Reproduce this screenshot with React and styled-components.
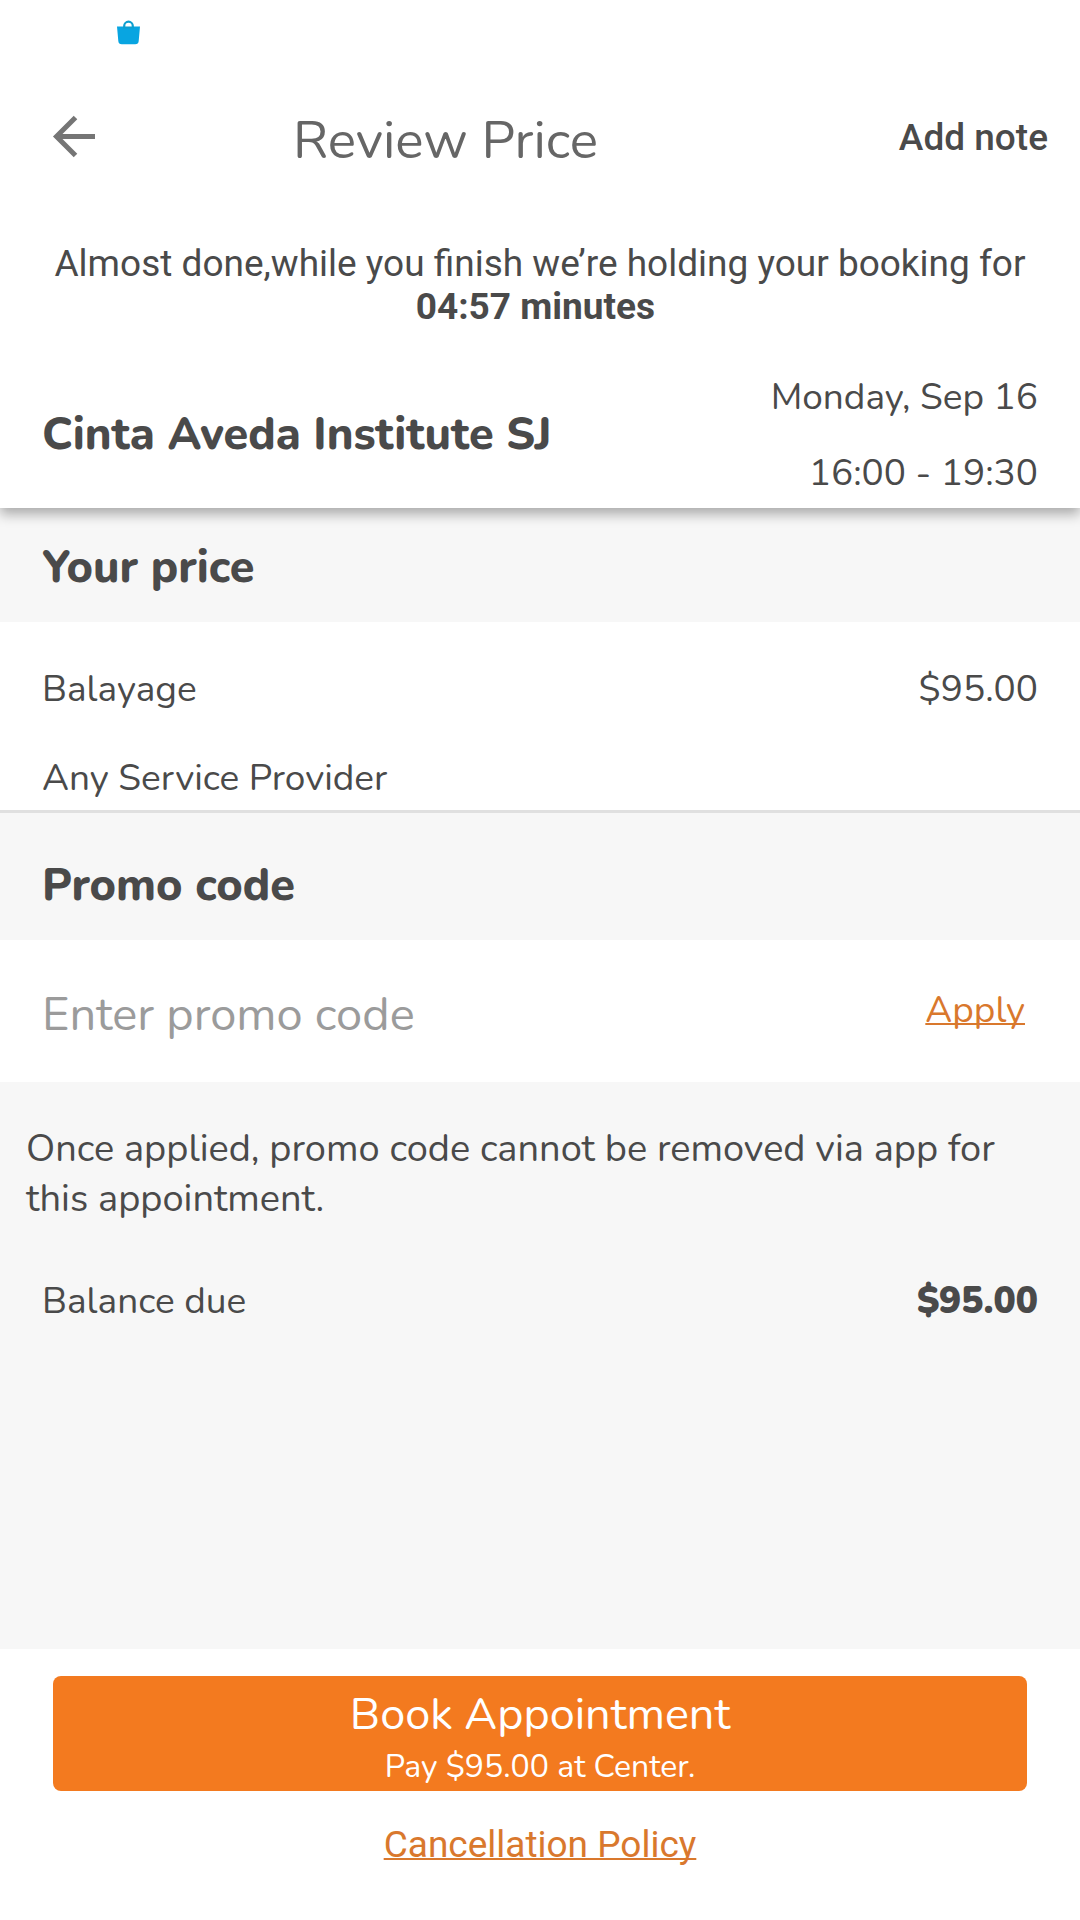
import React, { useState } from "react";
import styled, { createGlobalStyle } from "styled-components";

const ink = "#4a4a4a";
const orange = "#f37a1f";
const link = "#d9782d";
const shade = "#f7f7f7";
const rounded = '"Nunito", "Noto Sans", sans-serif';
const plain = 'Roboto, "Noto Sans", sans-serif';

const GlobalStyle = createGlobalStyle`
  *, *::before, *::after { box-sizing: border-box; }
  body { margin: 0; background: #fff; color: ${ink}; font-family: ${rounded}; }
  h1, h2, p { margin: 0; }
  button, input { font: inherit; color: inherit; }
`;

const Screen = styled.div`
  display: flex;
  flex-direction: column;
  min-height: 100vh;
  background: #fff;
`;

const StatusBar = styled.div`
  display: flex;
  height: 66px;
  padding: 20px 0 0 116px;
`;

const Header = styled.header`
  position: relative;
  z-index: 1;
  background: #fff;
  box-shadow: 0 6px 12px rgba(0, 0, 0, 0.32);
`;

const AppBar = styled.div`
  display: flex;
  align-items: center;
  height: 144px;
  padding: 0 32px 0 48px;
`;

const BareButton = styled.button`
  display: flex;
  padding: 0;
  border: 0;
  background: none;
  cursor: pointer;
`;

const Title = styled.h1`
  flex: 1;
  padding: 6px 0 0 193px;
  color: #666;
  font-size: 53px;
  font-weight: 400;
  line-height: 64px;
`;

const NoteButton = styled(BareButton)`
  font-family: ${plain};
  font-size: 37px;
  font-weight: 500;
  line-height: 44px;
`;

const HoldNotice = styled.p`
  padding-top: 32px;
  font-family: ${plain};
  font-size: 37px;
  line-height: 43px;
  text-align: center;
`;

const Venue = styled.div`
  display: flex;
  align-items: center;
  justify-content: space-between;
  padding: 34px 42px 0;
`;

const Heading = styled.h2`
  font-size: 45px;
  font-weight: 800;
  line-height: 56px;
`;

const Slot = styled.div`
  display: flex;
  flex-direction: column;
  gap: 6px;
  font-size: 37px;
  line-height: 70px;
  text-align: right;
`;

const SectionBar = styled.div`
  padding: ${(p) => p.$top}px 42px 26px;
  background: ${shade};
`;

const Services = styled.div`
  display: flex;
  flex-direction: column;
  gap: 25px;
  padding-top: 35px;
  border-bottom: 3px solid #e0e0e0;
`;

const Row = styled.div`
  display: flex;
  justify-content: space-between;
  padding: 0 42px;
  font-size: 37px;
  line-height: ${(p) => p.$line}px;
`;

const PromoForm = styled.form`
  display: flex;
  align-items: center;
  justify-content: space-between;
  height: 142px;
  padding: 6px 55px 0 42px;
`;

const PromoInput = styled.input`
  flex: 1;
  min-width: 0;
  height: 80px;
  padding: 0;
  border: 0;
  outline: 0;
  background: none;
  font-size: 47px;

  &::placeholder {
    color: #9b9b9b;
    opacity: 1;
  }
`;

const ApplyButton = styled(BareButton)`
  padding-bottom: 8px;
  color: ${link};
  font-size: 37px;
  line-height: 50px;
  text-decoration: underline;
  text-decoration-thickness: 2px;
  text-decoration-skip-ink: none;
`;

const Summary = styled.section`
  display: flex;
  flex: 1;
  flex-direction: column;
  gap: 52px;
  padding-top: 42px;
  background: ${shade};
`;

const Hint = styled.p`
  padding: 0 42px 0 26px;
  font-size: 38px;
  line-height: 50px;
`;

const Total = styled.strong`
  font-weight: 900;
`;

const Footer = styled.footer`
  display: flex;
  flex-direction: column;
  align-items: center;
  gap: 32px;
  padding: 27px 53px 53px;
`;

const BookButton = styled.button`
  display: flex;
  flex-direction: column;
  align-items: center;
  width: 100%;
  padding: 11px 0 0;
  border: 0;
  border-radius: 8px;
  background: ${orange};
  color: #fff;
  cursor: pointer;
`;

const BookTitle = styled.span`
  font-size: 45px;
  line-height: 56px;
`;

const BookDetail = styled.span`
  font-size: 32px;
  line-height: 48px;
`;

const PolicyLink = styled.a`
  color: ${link};
  font-family: ${plain};
  font-size: 37px;
  line-height: 44px;
  text-decoration-thickness: 2px;
  text-decoration-skip-ink: none;
`;

function BagIcon() {
  return (
    <svg width="25" height="25" viewBox="0 0 25 25" aria-hidden="true">
      <path d="M1 6.500h23l-1.300 14.500a3.500 3.500 0 0 1-3.500 3.200H5.800A3.500 3.500 0 0 1 2.300 21z" fill="#08a5e1" />
      <path d="M8.200 7.500V6a4.300 4.300 0 0 1 8.600 0v1.500z" fill="#fff" stroke="#0d9fd0" strokeWidth="2.200" />
    </svg>
  );
}

function BackIcon() {
  return (
    <svg width="52" height="56" viewBox="0 0 52 56" aria-hidden="true">
      <path d="M47 26.500H9M27.500 7.500 8.500 26.500l19 19" fill="none" stroke="#757575" strokeWidth="5" />
    </svg>
  );
}

export default function App() {
  const [code, setCode] = useState("");
  return (
    <>
      <GlobalStyle />
      <Screen>
        <Header>
          <StatusBar>
            <BagIcon />
          </StatusBar>
          <AppBar>
            <BareButton type="button" aria-label="Back">
              <BackIcon />
            </BareButton>
            <Title>Review Price</Title>
            <NoteButton type="button">Add note</NoteButton>
          </AppBar>
          <HoldNotice>
            Almost done,while you finish we’re holding your booking for
            <br />
            <b>04:57 minutes</b>&nbsp;
          </HoldNotice>
          <Venue>
            <Heading>Cinta Aveda Institute SJ</Heading>
            <Slot>
              <div>Monday, Sep 16</div>
              <div>16:00 - 19:30</div>
            </Slot>
          </Venue>
        </Header>
        <main>
          <SectionBar $top={32}>
            <Heading>Your price</Heading>
          </SectionBar>
          <Services>
            <Row $line={64}>
              <span>Balayage</span>
              <span>$95.00</span>
            </Row>
            <Row $line={64}>
              <span>Any Service Provider</span>
            </Row>
          </Services>
          <SectionBar $top={45}>
            <Heading>
              <label htmlFor="promo">Promo code</label>
            </Heading>
          </SectionBar>
          <PromoForm onSubmit={(e) => e.preventDefault()}>
            <PromoInput
              id="promo"
              placeholder="Enter promo code"
              value={code}
              onChange={(e) => setCode(e.target.value)}
            />
            <ApplyButton type="submit">Apply</ApplyButton>
          </PromoForm>
        </main>
        <Summary>
          <Hint>Once applied, promo code cannot be removed via app for this appointment.</Hint>
          <Row $line={50}>
            <span>Balance due</span>
            <Total>$95.00</Total>
          </Row>
        </Summary>
        <Footer>
          <BookButton type="button">
            <BookTitle>Book Appointment</BookTitle>
            <BookDetail>Pay $95.00 at Center.</BookDetail>
          </BookButton>
          <PolicyLink href="#policy">Cancellation Policy</PolicyLink>
        </Footer>
      </Screen>
    </>
  );
}
